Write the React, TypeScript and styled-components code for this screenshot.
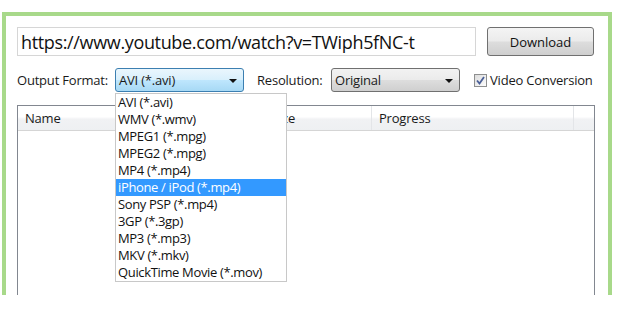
import React from "react";
import styled, { createGlobalStyle } from "styled-components";

const GlobalStyle = createGlobalStyle`
  html, body {
    margin: 0;
    padding: 0;
    background: #ffffff;
  }
  body {
    font-family: "Open Sans", "Noto Sans", sans-serif;
    color: #1a1a1a;
  }
`;

const Frame = styled.div`
  position: relative;
  box-sizing: border-box;
  margin: 12px 0 0 2px;
  width: 610px;
  height: 283px;
  border: 4px solid #a8d98a;
  border-bottom: none;
  padding: 11px 0 0 11px;
  display: flex;
  flex-direction: column;
  overflow: hidden;
`;

const UrlRow = styled.div`
  display: flex;
  gap: 11px;
  height: 29px;
`;

const UrlInput = styled.div`
  box-sizing: border-box;
  width: 459px;
  height: 29px;
  border: 1px solid #d6d6d6;
  padding: 0 0 0 3px;
  display: flex;
  align-items: center;
  font-size: 18px;
  letter-spacing: -0.35px;
  color: #111;
`;

const Button = styled.div`
  box-sizing: border-box;
  width: 107px;
  height: 29px;
  border: 1px solid #707070;
  border-radius: 3px;
  background: linear-gradient(#f4f4f4 0%, #ebebeb 48%, #dddddd 52%, #cfcfcf 100%);
  display: flex;
  align-items: center;
  justify-content: center;
  font-size: 13px;
  color: #111;
`;

const OptionsRow = styled.div`
  display: flex;
  align-items: center;
  margin-top: 12px;
  height: 24px;
  font-size: 13px;
`;

const Label = styled.span<{ $width: number }>`
  width: ${(p) => p.$width}px;
  white-space: nowrap;
  letter-spacing: -0.2px;
`;

const Select = styled.div<{ $active?: boolean }>`
  box-sizing: border-box;
  width: 129px;
  height: 24px;
  border: 1px solid ${(p) => (p.$active ? "#3c7fb1" : "#707070")};
  border-radius: 3px;
  background: ${(p) =>
    p.$active
      ? "linear-gradient(#eaf6fd 0%, #d9f0fc 48%, #bee6fd 52%, #a7d9f5 100%)"
      : "linear-gradient(#f2f2f2 0%, #ebebeb 48%, #dddddd 52%, #cfcfcf 100%)"};
  display: flex;
  align-items: center;
  justify-content: space-between;
  padding: 0 6px 0 3px;
  letter-spacing: -0.2px;
`;

const Arrow = styled.span`
  width: 0;
  height: 0;
  border-left: 4px solid transparent;
  border-right: 4px solid transparent;
  border-top: 4px solid #111;
  margin-top: 2px;
`;

const Spacer = styled.span<{ $width: number }>`
  width: ${(p) => p.$width}px;
  flex: none;
`;

const Check = styled.label`
  display: flex;
  align-items: center;
  gap: 3px;
  letter-spacing: -0.2px;
`;

const Box = styled.span`
  box-sizing: border-box;
  width: 13px;
  height: 13px;
  border: 1px solid #8e8f8f;
  background: linear-gradient(135deg, #dcdcdc, #fdfdfd);
  display: flex;
  align-items: center;
  justify-content: center;
`;

const List = styled.div`
  box-sizing: border-box;
  margin-top: 13px;
  width: 578px;
  flex: 1;
  border: 1px solid #828790;
  border-bottom: none;
  background: #fff;
`;

const Header = styled.div`
  display: flex;
  height: 24px;
  border-bottom: 1px solid #d5d5d5;
  background: linear-gradient(#ffffff 0%, #ffffff 45%, #f1f2f4 55%, #eef0f2 100%);
  font-size: 13px;
`;

const Column = styled.div<{ $width: number; $last?: boolean }>`
  box-sizing: border-box;
  width: ${(p) => p.$width}px;
  padding: 0 0 0 7px;
  display: flex;
  align-items: center;
  border-right: ${(p) => (p.$last ? "none" : "1px solid #e3e5e8")};
  letter-spacing: -0.2px;
`;

const Popup = styled.div`
  position: absolute;
  left: 109px;
  top: 77px;
  box-sizing: border-box;
  width: 172px;
  border: 1px solid #c8c8c8;
  background: #fff;
  font-size: 13px;
  z-index: 2;
`;

const Item = styled.div<{ $selected?: boolean }>`
  height: 17px;
  line-height: 17px;
  padding-left: 2px;
  white-space: nowrap;
  letter-spacing: -0.35px;
  background: ${(p) => (p.$selected ? "#3399ff" : "transparent")};
  color: ${(p) => (p.$selected ? "#fff" : "#111")};
`;

const formats = [
  "AVI (*.avi)",
  "WMV (*.wmv)",
  "MPEG1 (*.mpg)",
  "MPEG2 (*.mpg)",
  "MP4 (*.mp4)",
  "iPhone / iPod (*.mp4)",
  "Sony PSP (*.mp4)",
  "3GP (*.3gp)",
  "MP3 (*.mp3)",
  "MKV (*.mkv)",
  "QuickTime Movie (*.mov)",
];

const App = () => {
  return (
    <>
      <GlobalStyle />
      <Frame>
        <UrlRow>
          <UrlInput>https://www.youtube.com/watch?v=TWiph5fNC-t</UrlInput>
          <Button>Download</Button>
        </UrlRow>
        <OptionsRow>
          <Label $width={98}>Output Format:</Label>
          <Select $active>
            AVI (*.avi)
            <Arrow />
          </Select>
          <Spacer $width={13} />
          <Label $width={74}>Resolution:</Label>
          <Select>
            Original
            <Arrow />
          </Select>
          <Spacer $width={14} />
          <Check>
            <Box>
              <svg width="9" height="9" viewBox="0 0 9 9">
                <path
                  d="M1 4.5 L3.5 7.5 L8 1"
                  fill="none"
                  stroke="#4a5f97"
                  strokeWidth="1.8"
                />
              </svg>
            </Box>
            Video Conversion
          </Check>
        </OptionsRow>
        <List>
          <Header>
            <Column $width={247}>Name</Column>
            <Column $width={107}>Size</Column>
            <Column $width={202}>Progress</Column>
            <Column $width={20} $last />
          </Header>
        </List>
        <Popup>
          {formats.map((f) => (
            <Item key={f} $selected={f.startsWith("iPhone")}>
              {f}
            </Item>
          ))}
        </Popup>
      </Frame>
    </>
  );
};

export default App;
